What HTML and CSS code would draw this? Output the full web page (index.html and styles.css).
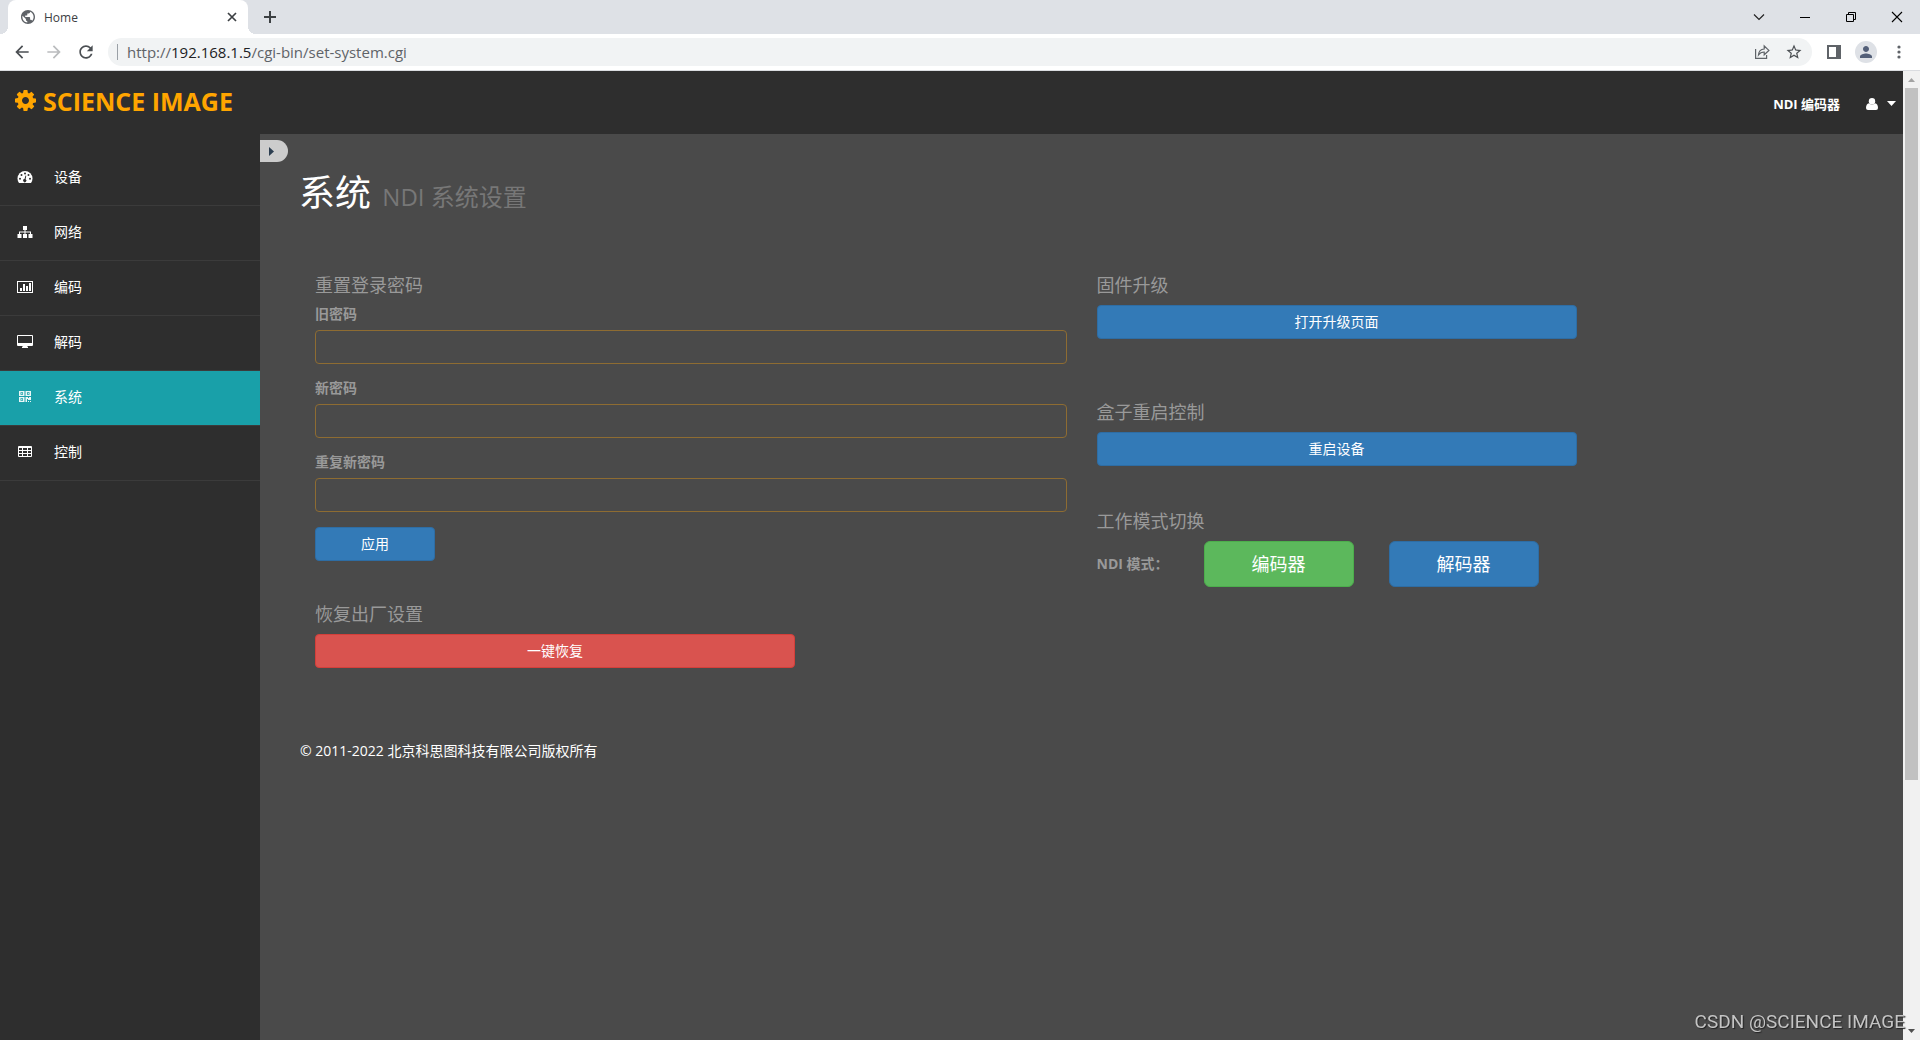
FILE: index.html
```html
<!DOCTYPE html>
<html lang="zh-CN">
<head>
<meta charset="utf-8">
<title>Home</title>
<link rel="stylesheet" href="styles.css">
</head>
<body>
<div class="browser">
  <div class="tabbar">
    <div class="tab">
      <svg class="tab-globe" viewBox="2 2 20 20"><path fill="#5f6368" d="M12 2C6.480 2 2 6.480 2 12s4.480 10 10 10 10-4.480 10-10S17.520 2 12 2zm-1 17.930c-3.950-.49-7-3.850-7-7.930 0-.62.08-1.210.21-1.790L9 15v1c0 1.100.9 2 2 2v1.930zm6.900-2.540c-.26-.81-1-1.390-1.900-1.390h-1v-3c0-.55-.45-1-1-1H8v-2h2c.55 0 1-.45 1-1V7h2c1.100 0 2-.9 2-2v-.41c2.930 1.190 5 4.060 5 7.410 0 2.080-.8 3.970-2.100 5.390z"/></svg>
      <span class="tab-title">Home</span>
      <button class="icon-btn tab-close" aria-label="关闭标签页"><svg width="10" height="10" viewBox="0 0 10 10"><path d="M1 1l8 8M9 1l-8 8" stroke="#3c4043" stroke-width="1.700"/></svg></button>
    </div>
    <button class="icon-btn new-tab" aria-label="新标签页"><svg width="12" height="12" viewBox="0 0 12 12"><path d="M6 0v12M0 6h12" stroke="#3c4043" stroke-width="2"/></svg></button>
    <div class="window-controls">
      <button class="icon-btn" aria-label="搜索标签页"><svg width="12" height="12" viewBox="0 0 12 12"><path d="M1 3.500l5 5 5-5" fill="none" stroke="#222" stroke-width="1.200"/></svg></button>
      <button class="icon-btn" aria-label="最小化"><svg width="12" height="12" viewBox="0 0 12 12"><path d="M1 6.500h10" stroke="#000"/></svg></button>
      <button class="icon-btn" aria-label="还原"><svg width="12" height="12" viewBox="0 0 12 12"><path d="M1.500 3.500h7v7h-7zM3.500 3.500v-2h7v7h-2" fill="none" stroke="#000"/></svg></button>
      <button class="icon-btn" aria-label="关闭"><svg width="12" height="12" viewBox="0 0 12 12"><path d="M1 1l10 10M11 1L1 11" stroke="#000" stroke-width="1.100"/></svg></button>
    </div>
  </div>
  <div class="toolbar">
    <div class="nav-buttons">
      <button class="icon-btn" aria-label="后退"><svg width="20" height="20" viewBox="0 0 24 24"><path fill="#4b4f53" d="M20 11H7.830l5.590-5.590L12 4l-8 8 8 8 1.410-1.410L7.830 13H20v-2z"/></svg></button>
      <button class="icon-btn" aria-label="前进"><svg width="20" height="20" viewBox="0 0 24 24"><path fill="#babcbe" d="M4 11h12.170l-5.590-5.590L12 4l8 8-8 8-1.410-1.410L16.170 13H4z"/></svg></button>
      <button class="icon-btn" aria-label="重新加载"><svg width="20" height="20" viewBox="0 0 24 24"><path fill="#4b4f53" d="M17.650 6.350C16.200 4.900 14.210 4 12 4c-4.420 0-7.990 3.580-7.990 8s3.570 8 7.990 8c3.730 0 6.840-2.550 7.730-6h-2.080c-.82 2.330-3.040 4-5.650 4-3.310 0-6-2.690-6-6s2.690-6 6-6c1.660 0 3.140.69 4.220 1.780L13 11h7V4l-2.350 2.350z"/></svg></button>
    </div>
    <div class="omnibox">
      <span class="omni-sep"></span>
      <span class="url">http://<b>192.168.1.5</b>/cgi-bin/set-system.cgi</span>
      <button class="icon-btn" aria-label="分享"><svg width="16" height="16" viewBox="0 0 16 16" fill="none" stroke="#5f6368" stroke-width="1.200"><path d="M1.600 5v9.400h11V11"/><path d="M4.500 10.800c.3-3.600 2.300-5.600 5.700-5.800V2l4.700 4.400-4.700 4.400V8c-2.600 0-4.300.8-5.700 2.800z"/></svg></button>
      <button class="icon-btn" aria-label="收藏"><svg width="18" height="18" viewBox="0 0 24 24"><path fill="#4b4f53" d="M22 9.240l-7.190-.62L12 2 9.190 8.630 2 9.240l5.460 4.730L5.820 21 12 17.270 18.180 21l-1.630-7.030L22 9.240zM12 15.400l-3.760 2.270 1-4.280-3.320-2.880 4.380-.38L12 6.100l1.710 4.040 4.380.38-3.320 2.880 1 4.280L12 15.400z"/></svg></button>
    </div>
    <div class="tool-right">
      <button class="icon-btn" aria-label="侧边栏"><svg width="14" height="14" viewBox="0 0 14 14"><path fill="#5f6368" fill-rule="evenodd" d="M0 0h14v14H0zM2 2v10h7V2z"/></svg></button>
      <button class="icon-btn avatar" aria-label="用户"><svg width="18" height="18" viewBox="0 0 24 24"><path fill="#535f78" d="M12 12c2.210 0 4-1.790 4-4s-1.790-4-4-4-4 1.790-4 4 1.790 4 4 4zm0 2c-2.670 0-8 1.340-8 4v2h16v-2c0-2.660-5.330-4-8-4z"/></svg></button>
      <button class="icon-btn" aria-label="菜单"><svg width="4" height="14" viewBox="0 0 4 14" fill="#5f6368"><circle cx="2" cy="2" r="1.600"/><circle cx="2" cy="7" r="1.600"/><circle cx="2" cy="12" r="1.600"/></svg></button>
    </div>
  </div>

  <div class="viewport">
    <div class="page">
      <header class="header">
        <a class="brand" href="#">
          <svg width="21" height="21" viewBox="0 128 1536 1536"><path fill="currentColor" d="M1024 896q0-106-75-181t-181-75-181 75-75 181 75 181 181 75 181-75 75-181zm512-109v222q0 12-8 23t-20 13l-185 28q-19 54-39 91 35 50 107 138 10 12 10 25t-9 23q-27 37-99 108t-94 71q-12 0-26-9l-138-108q-44 23-91 38-16 136-29 186-7 28-36 28h-222q-14 0-24.500-8.500t-11.500-21.500l-28-184q-49-16-90-37l-141 107q-10 9-25 9-14 0-25-11-126-114-165-168-7-10-7-23 0-12 8-23 15-21 51-66.500t54-70.500q-27-50-41-99l-183-27q-13-2-21-12.500t-8-23.500v-222q0-12 8-23t19-13l186-28q14-46 39-92-40-57-107-138-10-12-10-24 0-10 9-23 26-36 98.500-107.500t94.500-71.500q13 0 26 10l138 107q44-23 91-38 16-136 29-186 7-28 36-28h222q14 0 24.500 8.500t11.500 21.500l28 184q49 16 90 37l142-107q9-9 24-9 13 0 25 10 129 119 165 170 7 8 7 22 0 12-8 23-15 21-51 66.500t-54 70.500q26 50 41 98l183 28q13 2 21 12.500t8 23.500z"/></svg>
          <span>SCIENCE IMAGE</span>
        </a>
        <div class="header-right">
          <span class="mode">NDI 编码器</span>
          <button class="icon-btn user" aria-label="账户菜单">
            <svg width="12" height="12" viewBox="0 0 12 12" fill="#fff"><circle cx="6" cy="3.200" r="3.200"/><path d="M3 5.200C1 5.600 0 7.500 0 10q0 2 2 2h8q2 0 2-2c0-2.500-1-4.400-3-4.800Q6 7.800 3 5.200z"/></svg>
            <svg width="9" height="5" viewBox="0 0 9 5" fill="#fff"><path d="M0 0h9L4.500 5z"/></svg>
          </button>
        </div>
      </header>
      <div class="body">
        <nav class="sidebar">
          <a class="item" href="#"><svg viewBox="0 0 16 14"><path fill="#fff" d="M2 13Q.5 11 .5 8.500a7.500 7.500 0 0 1 15 0Q15.500 11 14 13z"/><g fill="#2e2e2e"><circle cx="3" cy="8.700" r="1"/><circle cx="4.500" cy="5" r="1"/><circle cx="8" cy="3.500" r="1"/><circle cx="11.500" cy="5" r="1"/><circle cx="13" cy="8.700" r="1"/><path d="M8.500 5.500l.8.200-.7 3.500a1.600 1.600 0 1 1-1.100-.2z"/></g></svg><span>设备</span></a>
          <a class="item" href="#"><svg viewBox="0 0 16 14"><path fill="#fff" d="M6 1h4v4H8.500v1.500H14V9h1.500v4h-4V9H13V7.500H8.500V9H10v4H6V9h1.500V7.500H3V9h1.500v4h-4V9H2V6.500h5.500V5H6z"/></svg><span>网络</span></a>
          <a class="item" href="#"><svg viewBox="0 0 16 14"><path fill="#fff" fill-rule="evenodd" d="M0 1h16v12H0zM1 2v10h14V2zM3 8h2v3H3zM6 4h2v7H6zM9 6h2v5H9zM12 3h2v8h-2z"/></svg><span>编码</span></a>
          <a class="item" href="#"><svg viewBox="0 0 16 14"><path fill="#fff" fill-rule="evenodd" d="M1 0h14q1 0 1 1v9q0 1-1 1h-4.500v1H11v1H5v-1h.5v-1H1q-1 0-1-1V1q0-1 1-1zM1 1v7h14V1z"/></svg><span>解码</span></a>
          <a class="item active" href="#"><svg viewBox="0 0 16 14"><path fill="#e8f6f6" fill-rule="evenodd" d="M2 1h5.500v5H2zM3.500 2.300v2.400H6V2.300zM8.500 1H14v5H8.500zM10 2.300v2.400h2.500V2.300zM2 7h5.500v5H2zM3.500 8.300v2.400H6V8.300zM8.500 7H11v1h1V7h2v3h-3V9h-1v3H8.500zM11 11h1v1h-1zM13 11h1v1h-1zM4.300 3h1v1h-1zM10.800 3h1v1h-1zM4.300 9h1v1h-1z"/></svg><span>系统</span></a>
          <a class="item" href="#"><svg viewBox="0 0 16 14"><path fill="#fff" fill-rule="evenodd" d="M1 2q0-1 1-1h12q1 0 1 1v9q0 1-1 1H2q-1 0-1-1zM2 3v2h3V3zM6 3v2h4V3zM11 3v2h3V3zM2 6v2h3V6zM6 6v2h4V6zM11 6v2h3V6zM2 9v2h3V9zM6 9v2h4V9zM11 9v2h3V9z"/></svg><span>控制</span></a>
        </nav>
        <main class="main">
          <button class="icon-btn toggle" aria-label="收起侧栏"><svg width="5" height="9" viewBox="0 0 5 9"><path fill="#2c3e50" d="M0 0v9l5-4.500z"/></svg></button>
          <h1 class="title">系统 <small>NDI 系统设置</small></h1>
          <div class="columns">
            <div>
              <form class="password-form">
                <h4>重置登录密码</h4>
                <label for="old-password">旧密码</label>
                <input id="old-password" type="password">
                <label for="new-password">新密码</label>
                <input id="new-password" type="password">
                <label for="repeat-password">重复新密码</label>
                <input id="repeat-password" type="password">
                <button type="button" class="btn primary apply">应用</button>
              </form>
              <section>
                <h4>恢复出厂设置</h4>
                <button type="button" class="btn danger wide">一键恢复</button>
              </section>
            </div>
            <div>
              <section class="upgrade">
                <h4>固件升级</h4>
                <button type="button" class="btn primary wide">打开升级页面</button>
              </section>
              <section class="restart">
                <h4>盒子重启控制</h4>
                <button type="button" class="btn primary wide">重启设备</button>
              </section>
              <section>
                <h4>工作模式切换</h4>
                <div class="mode-row">
                  <span class="mode-label">NDI 模式：</span>
                  <button type="button" class="btn success large">编码器</button>
                  <button type="button" class="btn primary large">解码器</button>
                </div>
              </section>
            </div>
          </div>
          <footer class="footer">© 2011-2022 北京科思图科技有限公司版权所有</footer>
        </main>
      </div>
    </div>
    <div class="scrollbar">
      <svg width="7" height="4" viewBox="0 0 7 4"><path fill="#a3a3a3" d="M0 4h7L3.500 0z"/></svg>
      <div class="track"><div class="thumb"></div></div>
      <svg width="7" height="4" viewBox="0 0 7 4"><path fill="#505050" d="M0 0h7L3.500 4z"/></svg>
    </div>
  </div>
</div>
<div class="watermark">CSDN @SCIENCE IMAGE</div>
</body>
</html>
```
FILE: styles.css
```css
* { box-sizing: border-box; }

body {
  margin: 0;
  font: 14px/20px "Open Sans", "Noto Sans CJK SC", sans-serif;
  color: #fff;
  background: #4a4a4a;
}

svg { display: block; flex: none; }

.icon-btn {
  display: flex;
  align-items: center;
  justify-content: center;
  padding: 0;
  border: 0;
  background: none;
}

.browser {
  display: flex;
  flex-direction: column;
  min-height: 100vh;
}

/* Tab strip */
.tabbar {
  display: flex;
  align-items: center;
  height: 34px;
  padding-left: 8px;
  background: #dee1e6;
}

.tab {
  position: relative;
  display: flex;
  align-items: center;
  width: 240px;
  height: 34px;
  padding: 0 11px 0 13px;
  border-radius: 8px 8px 0 0;
  background: #fff;
}

.tab::before,
.tab::after {
  content: "";
  position: absolute;
  bottom: 0;
  width: 8px;
  height: 8px;
}

.tab::before {
  left: -8px;
  background: radial-gradient(circle at 0 0, transparent 8px, #fff 8px);
}

.tab::after {
  right: -8px;
  background: radial-gradient(circle at 100% 0, transparent 8px, #fff 8px);
}

.tab-globe { width: 14px; height: 14px; }

.tab-title {
  flex: 1;
  margin-left: 9px;
  padding-top: 1px;
  font-size: 12px;
  color: #3c4043;
}

.new-tab { margin-left: 16px; }

.window-controls {
  display: flex;
  height: 28px;
  margin-left: auto;
}

.window-controls .icon-btn { width: 46px; }

/* Address bar */
.toolbar {
  display: flex;
  align-items: center;
  height: 37px;
  border-bottom: 1px solid #dadce0;
  padding: 0 11px 0 12px;
  background: #fff;
}

.nav-buttons { display: flex; gap: 12px; }

.omnibox {
  display: flex;
  flex: 1;
  align-items: center;
  gap: 15px;
  height: 28px;
  margin-left: 12px;
  padding: 0 9px;
  border-radius: 14px;
  background: #f1f3f4;
}

.omni-sep {
  width: 1px;
  height: 16px;
  margin-right: -6px;
  background: #9aa0a6;
}

.url { flex: 1; padding-bottom: 1px; font-size: 15px; color: #5f6368; }
.url b { font-weight: 400; color: #202124; }

.tool-right {
  display: flex;
  align-items: center;
  gap: 14px;
  margin-left: 15px;
  padding-right: 8px;
}

.avatar {
  width: 22px;
  height: 22px;
  border-radius: 50%;
  background: #dee1e6;
}

.tool-right .icon-btn:last-child { margin-left: 6px; }

/* Page area */
.viewport { display: flex; flex: 1; }

.page {
  display: flex;
  flex: 1;
  flex-direction: column;
}

.header {
  display: flex;
  align-items: center;
  justify-content: space-between;
  height: 63px;
  padding: 0 7px 0 15px;
  background: #2e2e2e;
}

.brand {
  display: flex;
  align-items: center;
  gap: 7px;
  padding-bottom: 4px;
  font-size: 25px;
  font-weight: 700;
  line-height: 36px;
  color: #ffa500;
  text-decoration: none;
}

.header-right {
  display: flex;
  align-items: center;
  gap: 26px;
  padding-top: 2px;
}

.mode { font-size: 13px; font-weight: 700; }

.user { gap: 9px; }

.body { display: flex; flex: 1; }

.sidebar {
  width: 260px;
  padding-top: 17px;
  background: #2e2e2e;
}

.item {
  display: flex;
  align-items: center;
  gap: 20px;
  height: 55px;
  padding: 0 0 2px 17px;
  border-bottom: 1px solid #3b3b3b;
  color: #fff;
  text-decoration: none;
}

.item svg { width: 16px; height: 14px; }
.item span { padding-left: 1px; }
.item.active { background: #19a0a9; }

.main { flex: 1; padding: 6px 40px 40px 0; }

.toggle {
  width: 28px;
  height: 22px;
  padding-right: 5px;
  border-radius: 0 11px 11px 0;
  background: #ccc;
}

.title {
  margin: 11px 0 0 39px;
  font-size: 36px;
  font-weight: 400;
  line-height: 40px;
}

.title small {
  margin-left: 2px;
  font-size: 24px;
  font-weight: 400;
  color: #777;
}

.columns {
  display: grid;
  grid-template-columns: 1fr 1fr;
  gap: 30px;
  margin-top: 58px;
  padding: 0 15px 0 55px;
  color: #999;
}

h4 {
  margin: 0 0 10px;
  font-size: 18px;
  font-weight: 400;
  line-height: 20px;
}

.password-form { margin-bottom: 43px; }
.password-form h4 { margin-bottom: 0; }

label {
  display: block;
  padding: 9px 0 6px;
  font-weight: 700;
}

input {
  display: block;
  width: 100%;
  height: 34px;
  margin-bottom: 5px;
  padding: 6px 12px;
  border: 1px solid #8e6c32;
  border-radius: 4px;
  background: transparent;
  font: inherit;
  color: #fff;
}

.btn {
  display: block;
  height: 34px;
  padding: 0 12px;
  border: 1px solid;
  border-radius: 4px;
  font: inherit;
  color: #fff;
}

.primary { background: #337ab7; border-color: #2e6da4; }
.danger { background: #d9534f; border-color: #d43f3a; }
.success { background: #5cb85c; border-color: #4cae4c; }
.apply { width: 120px; margin-top: 15px; }
.wide { width: 480px; max-width: 100%; }
.large { width: 150px; height: 46px; border-radius: 6px; font-size: 18px; }

.upgrade { margin-bottom: 63px; }
.restart { margin-bottom: 45px; }

.mode-row { display: flex; align-items: center; gap: 35px; }
.mode-label { width: 72px; font-weight: 700; white-space: nowrap; }

.footer { margin: 73px 0 0 40px; }

/* Scrollbar */
.scrollbar {
  display: flex;
  flex-direction: column;
  align-items: center;
  width: 17px;
  padding: 7px 0;
  background: #f1f1f1;
}

.track { flex: 1; width: 13px; padding: 6px 0; }
.thumb { height: 74%; background: #c1c1c1; }

.watermark {
  position: fixed;
  right: 15px;
  bottom: 6px;
  font: 19px/24px Roboto, sans-serif;
  color: #c4c4c4;
  text-shadow: 1px 1px 1px #222;
}
```
